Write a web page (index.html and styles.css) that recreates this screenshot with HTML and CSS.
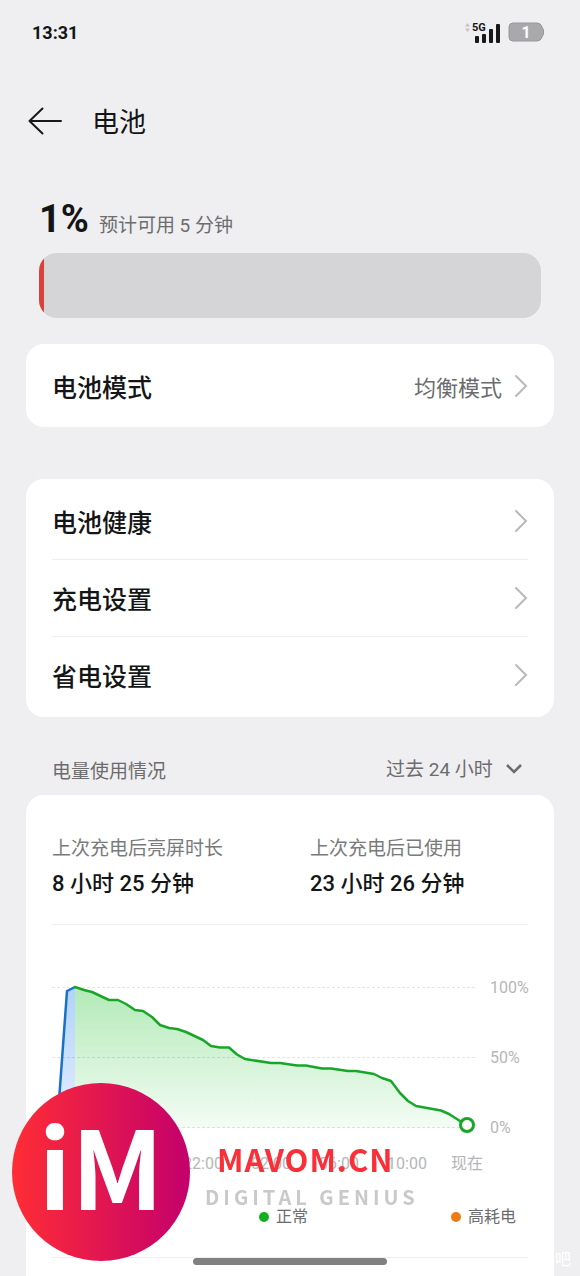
FILE: index.html
```
<!DOCTYPE html>
<html lang="zh-CN">
<head>
<meta charset="utf-8">
<meta name="viewport" content="width=device-width, initial-scale=1">
<title>电池</title>
<link rel="stylesheet" href="styles.css">
</head>
<body>
<div class="screen">
  <header class="status">
    <span class="time">13:31</span>
    <span class="indicators">
      <svg class="signal" width="38" height="24" viewBox="0 0 38 24" aria-hidden="true">
        <path d="M1 6.500L3.500 3L6 6.500ZM1 8.500L3.500 12L6 8.500Z" fill="#c4c4c6"/>
        <text x="8" y="11" class="net">5G</text>
        <rect x="11" y="16" width="4" height="7" rx="1" fill="#17181a"/>
        <rect x="18" y="14" width="4" height="9" rx="1" fill="#17181a"/>
        <rect x="25" y="9" width="4" height="14" rx="1" fill="#17181a"/>
        <rect x="32" y="4" width="4" height="19" rx="1" fill="#17181a"/>
      </svg>
      <svg class="cell" width="37" height="20" viewBox="0 0 37 20" aria-hidden="true">
        <path d="M5 1H29Q33 1 34 5L35.500 8V12L34 15Q33 19 29 19H5Q1 19 1 15V5Q1 1 5 1Z" fill="#a9a9ab" stroke="#98989a"/>
        <text x="18" y="16" text-anchor="middle" class="level">1</text>
      </svg>
    </span>
  </header>

  <div class="title-bar">
    <button class="back" type="button" aria-label="返回">
      <svg width="34" height="28" viewBox="0 0 34 28"><path d="M14.500 1.500L1.500 14L14.500 26.500M1.500 14H33" fill="none" stroke="#17181a" stroke-width="2" stroke-linecap="round" stroke-linejoin="round"/></svg>
    </button>
    <h1>电池</h1>
  </div>

  <main>
    <section class="charge">
      <p class="summary"><strong>1%</strong><span>预计可用 5 分钟</span></p>
      <div class="gauge" role="progressbar" aria-label="电量" aria-valuenow="1" aria-valuemin="0" aria-valuemax="100"><div class="fill" style="width:1%"></div></div>
    </section>

    <nav class="card mode">
      <a class="row" href="#mode"><span>电池模式</span><span class="value">均衡模式</span>
        <svg class="chevron" viewBox="0 0 14 24"><path d="M2 2L12 12L2 22"/></svg></a>
    </nav>

    <nav class="card settings">
      <a class="row" href="#health"><span>电池健康</span><svg class="chevron" viewBox="0 0 14 24"><path d="M2 2L12 12L2 22"/></svg></a>
      <a class="row" href="#charging"><span>充电设置</span><svg class="chevron" viewBox="0 0 14 24"><path d="M2 2L12 12L2 22"/></svg></a>
      <a class="row" href="#saving"><span>省电设置</span><svg class="chevron" viewBox="0 0 14 24"><path d="M2 2L12 12L2 22"/></svg></a>
    </nav>

    <div class="usage-head">
      <label for="period">电量使用情况</label>
      <span class="period">
        <select id="period"><option>过去 24 小时</option></select>
        <svg width="18" height="12" viewBox="0 0 18 12" aria-hidden="true"><path d="M2 2L9 9L16 2" fill="none" stroke="#6c6c6e" stroke-width="2.500"/></svg>
      </span>
    </div>

    <section class="card usage">
      <dl class="stats">
        <div><dt>上次充电后亮屏时长</dt><dd>8 小时 25 分钟</dd></div>
        <div><dt>上次充电后已使用</dt><dd>23 小时 26 分钟</dd></div>
      </dl>
      <div class="chart">
        <svg class="plot" viewBox="0 0 424 152" role="img" aria-label="过去 24 小时电量">
          <defs>
            <linearGradient id="green" x1="0" y1="0" x2="0" y2="1"><stop offset="0" stop-color="#b2eab7"/><stop offset="1" stop-color="#f4fcf5"/></linearGradient>
            <linearGradient id="blue" x1="0" y1="0" x2="0" y2="1"><stop offset="0" stop-color="#b0d2fb"/><stop offset="1" stop-color="#e6effe"/></linearGradient>
          </defs>
          <path d="M5 148L15 11L23 7V148Z" fill="url(#blue)"/>
          <path d="M23 7L32 10L40 12L57 20H66L74 24L83 30L91 31L100 37L108 45L117 48L125 49L134 52L151 60L159 66L168 67.500H177L185 74.500L193 79L219 83H228L245 85.500H254L270 88.500H279L296 91H304L322 94L330 98L339 101L348 113L356 121L364 126L389 130.500L397 134L408 141L415 145V148H23Z" fill="url(#green)"/>
          <path d="M0 7.500H424M0 77.500H424M0 147.500H424" stroke="#000" stroke-opacity=".1" stroke-dasharray="3 2"/>
          <path d="M5 148L15 11L23 7" fill="none" stroke="#1870c8" stroke-width="2.500" stroke-linejoin="round"/>
          <path d="M23 7L32 10L40 12L57 20H66L74 24L83 30L91 31L100 37L108 45L117 48L125 49L134 52L151 60L159 66L168 67.500H177L185 74.500L193 79L219 83H228L245 85.500H254L270 88.500H279L296 91H304L322 94L330 98L339 101L348 113L356 121L364 126L389 130.500L397 134L408 141L415 145" fill="none" stroke="#18a629" stroke-width="2.500" stroke-linejoin="round" stroke-linecap="round"/>
          <circle cx="415" cy="145" r="6.500" fill="#fff" stroke="#18a629" stroke-width="3"/>
        </svg>
        <div class="levels"><span>100%</span><span>50%</span><span>0%</span></div>
      </div>
      <div class="hours"><span>22:00</span><span>02:00</span><span>06:00</span><span>10:00</span><span>现在</span></div>
      <div class="legend"><span class="normal">正常</span><span class="heavy">高耗电</span></div>
    </section>
  </main>

  <div class="home-bar"></div>
  <div class="brand">
    <div class="logo">iM</div>
    <div class="brand-text"><span class="site">MAVOM.CN</span><span class="tagline">DIGITAL GENIUS</span></div>
  </div>
  <span class="corner-mark">吧</span>
</div>
</body>
</html>
```
FILE: styles.css
```
* { box-sizing: border-box; }
body {
  margin: 0;
  background: #efeff1;
  color: #141517;
  font-family: Roboto, "Noto Sans CJK SC", sans-serif;
}
h1, p, dl, dd { margin: 0; font-weight: 500; }
a { color: inherit; text-decoration: none; }
svg { display: block; flex: none; overflow: visible; }

.screen { position: relative; overflow: hidden; min-height: 100vh; }

.status {
  display: flex;
  justify-content: space-between;
  align-items: center;
  height: 64px;
  padding: 0 35px 0 32px;
}
.time { font-size: 18px; font-weight: 700; }
.indicators { display: flex; align-items: center; gap: 6px; }
.net { font: 700 11px Roboto, sans-serif; fill: #17181a; }
.level { font: 700 16px Roboto, sans-serif; fill: #fff; }

.title-bar {
  display: flex;
  align-items: center;
  gap: 30px;
  height: 114px;
  padding: 0 28px;
}
.back { padding: 0; border: 0; background: none; }
h1 { padding-top: 4px; font-size: 27px; line-height: 40px; font-weight: 400; }

main { padding: 0 26px; }
.charge { padding: 18px 13px 26px; }
.summary { display: flex; align-items: baseline; gap: 10px; height: 57px; }
.summary strong { font-size: 38px; line-height: 46px; font-weight: 700; }
.summary span { font-size: 19px; font-weight: 400; color: #6c6c6e; }
.gauge { height: 65px; border-radius: 18px; overflow: hidden; background: #d5d5d7; }
.fill { height: 100%; background: #dc4038; }

.card { border-radius: 18px; background: #fff; padding: 0 26px; }
.mode { padding-top: 3px; padding-bottom: 3px; margin-bottom: 52px; }
.settings { padding-top: 3px; padding-bottom: 4px; }
.row {
  display: flex;
  align-items: center;
  height: 77px;
  font-size: 25px;
  font-weight: 500;
}
.row + .row { border-top: 1px solid #eeeeef; }
.value { margin-left: auto; font-size: 22px; font-weight: 400; color: #6c6c6e; }
.chevron {
  width: 14px;
  height: 24px;
  margin-left: auto;
  fill: none;
  stroke: #b9b9bb;
  stroke-width: 2;
  stroke-linecap: round;
}
.value + .chevron { margin-left: 12px; }

.usage-head {
  display: flex;
  align-items: center;
  justify-content: space-between;
  height: 78px;
  padding: 26px 31px 0 26px;
  font-size: 19px;
  color: #6c6c6e;
}
.period { display: flex; align-items: center; gap: 12px; }
select {
  appearance: none;
  padding: 0;
  border: 0;
  background: none;
  color: inherit;
  font: inherit;
}

.usage { padding-top: 38px; padding-bottom: 19px; border-radius: 18px 18px 0 0; }
.stats {
  display: grid;
  grid-template-columns: 258px 1fr;
  padding-bottom: 21px;
  border-bottom: 1px solid #eeeeef;
}
dt { font-size: 19px; line-height: 32px; font-weight: 400; color: #7a7a7c; }
dd { font-size: 22px; line-height: 38px; }

.chart { display: flex; gap: 14px; padding-top: 55px; }
.plot { flex: 1; min-width: 0; }
.levels {
  display: flex;
  flex-direction: column;
  justify-content: space-between;
  width: 38px;
  margin: -2px 0 -6px;
  font-size: 16px;
  line-height: 20px;
  color: #b6b6b8;
}
.hours {
  display: grid;
  grid-template-columns: repeat(4, 68px) 52px;
  justify-content: end;
  padding: 20px 35px 0 0;
  text-align: center;
  font-size: 16px;
  line-height: 24px;
  color: #b6b6b8;
}
.legend {
  display: flex;
  justify-content: space-between;
  margin-top: 29px;
  padding: 0 12px 28px 207px;
  border-bottom: 1px solid #eeeeef;
  font-size: 16px;
  line-height: 24px;
  color: #6c6c6e;
}
.legend span { display: flex; align-items: center; gap: 7px; }
.legend span::before { content: ""; width: 10px; height: 10px; border-radius: 50%; background: #12b020; }
.legend .heavy::before { background: #ef7a12; }

.home-bar {
  position: fixed;
  bottom: 11px;
  left: 50%;
  width: 194px;
  height: 7px;
  margin-left: -97px;
  border-radius: 4px;
  background: #808080;
}
.brand {
  position: fixed;
  left: 12px;
  bottom: 15px;
  display: flex;
  align-items: center;
  gap: 15px;
}
.logo {
  width: 178px;
  height: 178px;
  border-radius: 50%;
  background: linear-gradient(90deg, #ff2d35, #c4006c);
  color: #fff;
  text-align: center;
  font: 700 108px/160px "Noto Sans CJK SC", sans-serif;
}
.brand-text {
  display: flex;
  flex-direction: column;
  padding-top: 10px;
  font-family: "Noto Sans CJK SC", sans-serif;
  font-weight: 700;
  white-space: nowrap;
}
.site { padding-left: 12px; color: #fb2f37; font-size: 31px; line-height: 40px; letter-spacing: 1px; }
.tagline { color: #c9c9cb; font-size: 20px; line-height: 36px; letter-spacing: 4px; }
.corner-mark { position: fixed; right: 9px; bottom: 4px; font-size: 16px; line-height: 24px; color: #fff; }
```
